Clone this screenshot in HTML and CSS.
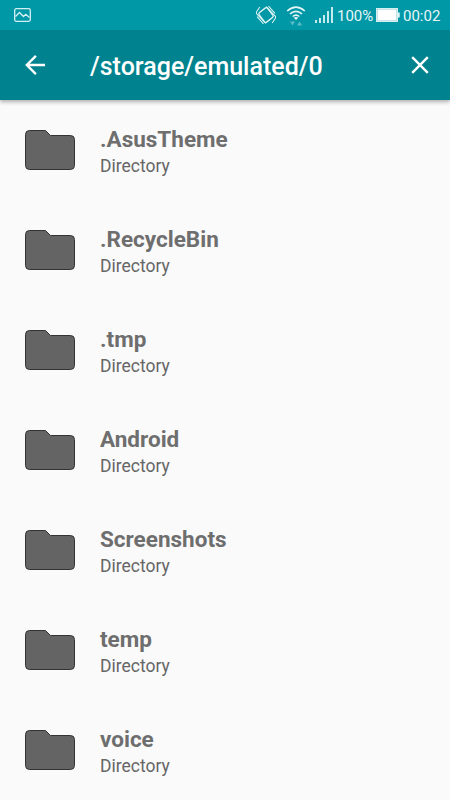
FILE: index.html
```html
<!DOCTYPE html>
<html lang="en">
<head>
    <meta charset="UTF-8">
    <meta name="viewport" content="width=device-width, initial-scale=1.0">
    <title>/storage/emulated/0</title>
    <link rel="stylesheet" href="styles.css">
</head>
<body>
    <svg class="sprite" width="0" height="0">
        <symbol id="folder" viewBox="0 0 50 40">
            <path d="M4.5 .5H20.5L25.5 5.5H45.5Q49.5 5.5 49.5 9.5V35.5Q49.5 39.5 45.5 39.5H4.5Q.5 39.5 .5 35.5V4.5Q.5 .5 4.5 .5Z" fill="#646464" stroke="#333"/>
        </symbol>
    </svg>

    <div class="status-bar">
        <svg class="picture-icon" width="17" height="14" viewBox="0 0 17 14" fill="none" stroke="#d5f0f2" stroke-width="1.3">
            <rect x=".7" y=".7" width="15.6" height="12.6" rx="1.5"/>
            <path d="M1.5 8.5L5.5 4.5L9.5 8.5L11.7 6.3L15.5 9.5"/>
        </svg>
        <div class="status-right">
            <svg class="rotate-icon" width="20" height="20" viewBox="0 0 20 20" fill="none" stroke="#e2f5f6" stroke-width="1.3">
                <rect x="4" y="4.7" width="12" height="10.6" rx="1.8" transform="rotate(52 10 10)"/>
                <path d="M5 1.2L1.2 5.4Q.4 6.4 1 7.6L8.6 18.4M.9 10.4L6.3 18.4M15 18.8L18.8 14.6Q19.6 13.6 19 12.4L11.4 1.6M19.1 9.6L13.7 1.6" stroke-width="1" transform="rotate(-8 10 10)"/>
            </svg>
            <svg class="wifi-icon" width="20" height="20" viewBox="0 0 20 20" fill="none" stroke="#e6f6f7" stroke-width="1.6">
                <path d="M1.2 5Q10-2.7 18.8 5M4 7.9Q10 2.9 16 7.9M6.7 10.5Q10 7.8 13.3 10.5"/>
                <path d="M7.8 11.7Q10 10.3 12.2 11.7L10 14Z" fill="#e6f6f7" stroke="none"/>
                <path d="M4 15.5H9L6.5 19.5ZM11 19.5H16L13.5 15.5Z" fill="#5cbdc6" stroke="none"/>
            </svg>
            <svg class="signal-icon" width="18" height="16" viewBox="0 0 18 16" fill="#c5eaed">
                <path d="M0 13H2V16H0ZM4 11H6V16H4ZM8 8H10V16H8ZM12 4H14V16H12ZM16 0H18V16H16Z"/>
            </svg>
            <span class="percent">100%</span>
            <svg class="battery-icon" width="24" height="14" viewBox="0 0 24 14">
                <rect x=".5" y=".5" width="21" height="13" fill="#8fcdd4" stroke="#d5eff1"/>
                <path d="M1.5 1.5H20.5V12.5H1.5Z" fill="#fff"/>
                <path d="M22 4.5H23.7V9.5H22Z" fill="#e6f6f7"/>
            </svg>
            <span class="time">00:02</span>
        </div>
    </div>

    <header class="toolbar">
        <svg class="back" width="20" height="20" viewBox="0 0 20 20" fill="none" stroke="#fff" stroke-width="2.4">
            <path d="M20 10H2M10.9 .9L1.8 10L10.9 19.1"/>
        </svg>
        <h1 class="title">/storage/emulated/0</h1>
        <svg class="close" width="18" height="18" viewBox="0 0 18 18" fill="none" stroke="#fff" stroke-width="2.4">
            <path d="M1.2 1.2L16.8 16.8M16.8 1.2L1.2 16.8"/>
        </svg>
    </header>

    <ul class="file-list">
        <li class="file">
            <svg class="folder"><use href="#folder"/></svg>
            <div class="info">
                <div class="name">.AsusTheme</div>
                <div class="type">Directory</div>
            </div>
        </li>
        <li class="file">
            <svg class="folder"><use href="#folder"/></svg>
            <div class="info">
                <div class="name">.RecycleBin</div>
                <div class="type">Directory</div>
            </div>
        </li>
        <li class="file">
            <svg class="folder"><use href="#folder"/></svg>
            <div class="info">
                <div class="name">.tmp</div>
                <div class="type">Directory</div>
            </div>
        </li>
        <li class="file">
            <svg class="folder"><use href="#folder"/></svg>
            <div class="info">
                <div class="name">Android</div>
                <div class="type">Directory</div>
            </div>
        </li>
        <li class="file">
            <svg class="folder"><use href="#folder"/></svg>
            <div class="info">
                <div class="name">Screenshots</div>
                <div class="type">Directory</div>
            </div>
        </li>
        <li class="file">
            <svg class="folder"><use href="#folder"/></svg>
            <div class="info">
                <div class="name">temp</div>
                <div class="type">Directory</div>
            </div>
        </li>
        <li class="file">
            <svg class="folder"><use href="#folder"/></svg>
            <div class="info">
                <div class="name">voice</div>
                <div class="type">Directory</div>
            </div>
        </li>
    </ul>
</body>
</html>
```
FILE: styles.css
```css
* {
    box-sizing: border-box;
}

body {
    margin: 0;
    height: 800px;
    overflow: hidden;
    font-family: Roboto, "Liberation Sans", sans-serif;
    background: #fafafa;
}

svg {
    display: block;
    flex-shrink: 0;
}

.sprite {
    position: absolute;
}

.status-bar {
    position: relative;
    z-index: 1;
    display: flex;
    justify-content: space-between;
    height: 30px;
    padding: 0 10px 0 14px;
    background: #0097a7;
    color: #e6f6f7;
}

.picture-icon {
    margin-top: 8px;
}

.status-right {
    display: flex;
    align-items: center;
    font-size: 15px;
    line-height: 28px;
}

.rotate-icon {
    margin-right: 10px;
}

.wifi-icon {
    margin-top: 2px;
    margin-right: 9px;
}

.signal-icon {
    margin-right: 4px;
}

.percent {
    width: 39px;
    padding-top: 2px;
}

.battery-icon {
    margin-right: 3px;
}

.time {
    width: 37px;
    padding-top: 2px;
    white-space: nowrap;
}

.toolbar {
    display: flex;
    align-items: center;
    height: 70px;
    padding: 0 21px 0 25px;
    background: #00838f;
    box-shadow: 0 2px 4px rgba(0, 0, 0, 0.3);
}

.title {
    flex: 1;
    margin: 0 0 0 45px;
    padding-top: 3px;
    color: #fff;
    font-size: 25px;
    font-weight: 500;
    line-height: 30px;
}

.file-list {
    margin: 0;
    padding: 0;
    list-style: none;
}

.file {
    display: flex;
    align-items: center;
    height: 100px;
    padding: 0 25px;
}

.folder {
    width: 50px;
    height: 40px;
    margin-right: 25px;
}

.info {
    padding-top: 3px;
}

.name {
    color: #6e6e6e;
    font-size: 22.5px;
    font-weight: 700;
    line-height: 28px;
}

.type {
    color: #666;
    font-size: 17.5px;
    line-height: 26px;
}
```
